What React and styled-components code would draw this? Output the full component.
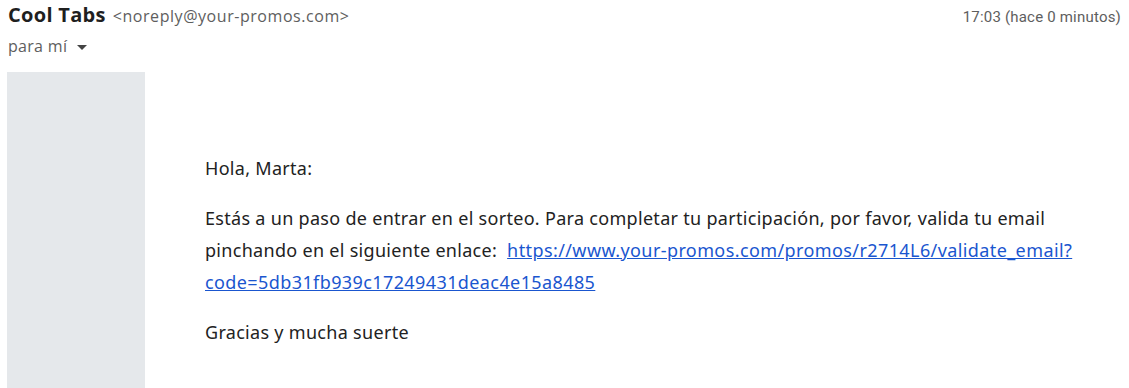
import React from "react";
import styled, { createGlobalStyle } from "styled-components";

const Global = createGlobalStyle`
  html, body { margin: 0; padding: 0; background: #fff; }
  body { font-family: "Open Sans", Roboto, "Liberation Sans", Arial, sans-serif; }
`;

const Page = styled.div`
  width: 1129px;
  height: 388px;
  overflow: hidden;
  display: flex;
  flex-direction: column;
`;

const HeaderRow = styled.div`
  display: flex;
  justify-content: space-between;
  align-items: baseline;
  padding: 1px 8px 0 8px;
  height: 28px;
`;

const Sender = styled.div`
  display: flex;
  align-items: baseline;
  gap: 7px;
`;

const Name = styled.span`
  font-size: 20px;
  font-weight: 700;
  letter-spacing: 0.3px;
  color: #1f1f1f;
`;

const Address = styled.span`
  font-size: 16px;
  letter-spacing: 0.55px;
  color: #5e5e5e;
`;

const Time = styled.span`
  font-family: Roboto, "Liberation Sans", sans-serif;
  font-size: 15px;
  letter-spacing: 0.2px;
  color: #5e5e5e;
`;

const Recipient = styled.div`
  display: flex;
  align-items: center;
  gap: 6px;
  padding: 3px 8px 0 8px;
  height: 28px;
  font-size: 16px;
  letter-spacing: 0.3px;
  color: #5e5e5e;
`;

const Caret = styled.span`
  width: 0;
  height: 0;
  border-left: 5.5px solid transparent;
  border-right: 5.5px solid transparent;
  border-top: 5px solid #444;
  margin-left: 4px;
  margin-top: 2px;
`;

const Content = styled.div`
  display: flex;
  flex: 1;
  margin-top: 12px;
`;

const Side = styled.div`
  width: 138px;
  margin-left: 7px;
  background: #e5e8eb;
`;

const Body = styled.div`
  padding: 80px 0 0 60px;
  font-family: "Noto Sans", "Open Sans", sans-serif;
  font-size: 18px;
  letter-spacing: 0.3px;
  line-height: 32px;
  color: #222222;
`;

const Para = styled.p`
  margin: 0 0 18px 0;
  max-width: 880px;
`;

const Link = styled.a`
  color: #1a56cf;
  letter-spacing: 0.4px;
  text-decoration: underline;
`;

export default function App() {
  return (
    <Page>
      <Global />
      <HeaderRow>
        <Sender>
          <Name>Cool Tabs</Name>
          <Address>&lt;noreply@your-promos.com&gt;</Address>
        </Sender>
        <Time>17:03 (hace 0 minutos)</Time>
      </HeaderRow>
      <Recipient>
        para mí <Caret />
      </Recipient>
      <Content>
        <Side />
        <Body>
          <Para>Hola, Marta:</Para>
          <Para>
            Estás a un paso de entrar en el sorteo. Para completar tu participación, por favor, valida tu email
            pinchando en el siguiente enlace:&nbsp;{" "}
            <Link href="#">https://www.your-promos.com/promos/r2714L6/validate_email?code=5db31fb939c17249431deac4e15a8485</Link>
          </Para>
          <Para>Gracias y mucha suerte</Para>
        </Body>
      </Content>
    </Page>
  );
}
